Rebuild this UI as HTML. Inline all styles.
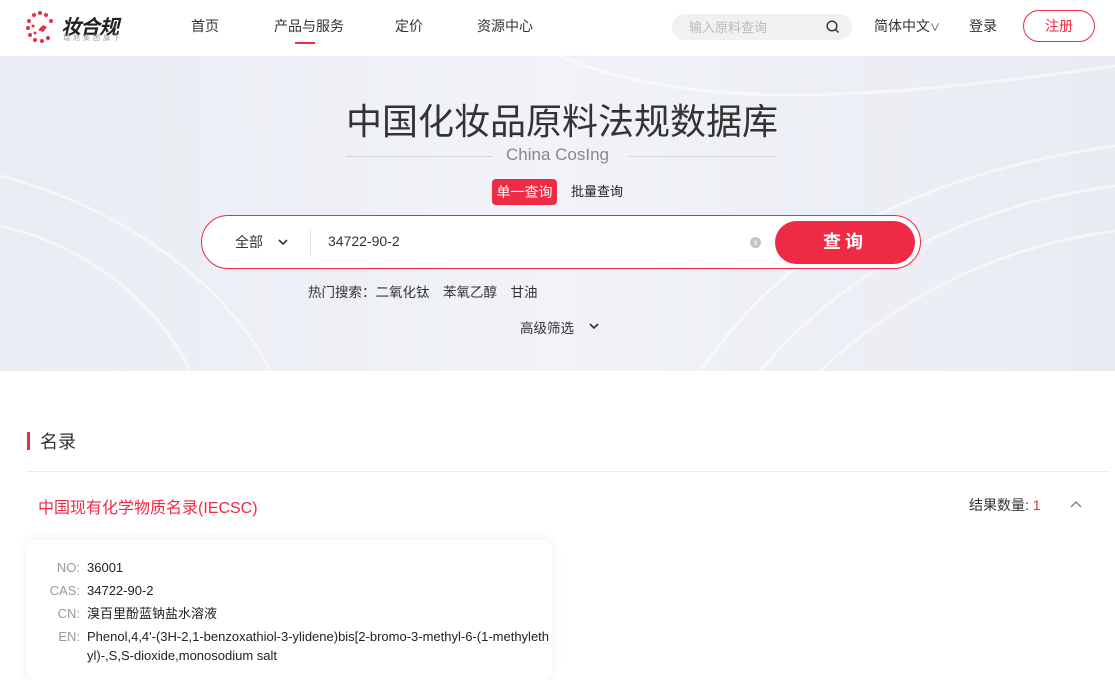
<!DOCTYPE html>
<html><head><meta charset="utf-8"><style>
*{margin:0;padding:0;box-sizing:border-box}
body{width:1115px;height:671px;overflow:hidden;background:#fff;font-family:"Liberation Sans","Noto Sans CJK SC",sans-serif;color:#333;position:relative}
.abs{position:absolute}
.nav{font-size:14px;color:#333;top:16px}
.hero{top:56px;left:0;width:1115px;height:315px;background:linear-gradient(90deg,#e9ecf3,#f1f3f8 50%,#e8ebf2);overflow:hidden}
</style></head><body>
<div class="abs" style="left:26px;top:10px;width:28px;height:34px">
<svg width="28" height="34" viewBox="0 0 28 34"><g fill="#ee2a45">
<circle cx="14" cy="3" r="2"/><circle cx="20" cy="5" r="2"/><circle cx="8" cy="5" r="2"/><circle cx="3" cy="11" r="2"/><circle cx="2" cy="18" r="2"/><circle cx="4" cy="25" r="2"/><circle cx="9" cy="30" r="2"/><circle cx="16" cy="31" r="2"/><circle cx="22" cy="28" r="2"/><circle cx="25" cy="11" r="2"/><circle cx="7" cy="16" r="1.5"/><circle cx="9" cy="23" r="1.5"/><path d="M12 20 l5 -5 l4 2 l-4 5z"/></g></svg></div>
<div class="abs" style="left:61px;top:11px;font-size:20px;font-weight:bold;font-style:italic;color:#222;letter-spacing:-1px">妆合规</div>
<div class="abs" style="left:63px;top:33px;font-size:7px;color:#999;letter-spacing:3px">瑞旭集团旗下</div>
<div class="abs nav" style="left:191px">首页</div>
<div class="abs nav" style="left:274px">产品与服务</div>
<div class="abs" style="left:295px;top:42px;width:20px;height:2px;background:#ee2a45"></div>
<div class="abs nav" style="left:395px">定价</div>
<div class="abs nav" style="left:477px">资源中心</div>
<div class="abs" style="left:672px;top:14px;width:180px;height:26px;border-radius:13px;background:#f1f1f1;font-size:13px;color:#bbb;padding:3px 0 0 17px">输入原料查询</div>
<svg class="abs" style="left:826px;top:20px" width="14" height="14" viewBox="0 0 14 14"><circle cx="6" cy="6" r="4.8" fill="none" stroke="#333" stroke-width="1.4"/><path d="M9.5 9.5l3 3" stroke="#333" stroke-width="1.4"/></svg>
<div class="abs nav" style="left:874px">简体中文<span style="font-size:10px">∨</span></div>
<div class="abs nav" style="left:969px">登录</div>
<div class="abs" style="left:1023px;top:10px;width:72px;height:32px;border:1px solid #ee2a45;border-radius:16px;color:#ee2a45;font-size:14px;text-align:center;line-height:30px">注册</div>
<div class="abs hero">
<svg width="1115" height="315" style="position:absolute;left:0;top:0"><g fill="none" stroke="#fff" stroke-opacity=".5" stroke-width="3">
<path d="M700 315 C780 200 900 120 1115 90"/><path d="M760 315 C840 220 960 150 1115 130"/><path d="M820 315 C900 240 1000 190 1115 175"/><path d="M0 120 C120 150 230 230 270 315"/><path d="M0 170 C90 190 160 250 190 315"/><path d="M560 0 C700 60 900 40 1115 10"/></g></svg>
</div>
<div class="abs" style="left:346px;top:93px;font-size:36px;color:#333;white-space:nowrap;width:430px;text-align:center">中国化妆品原料法规数据库</div>
<div class="abs" style="left:346px;top:156px;width:146px;height:1px;background:#d5d5d8"></div>
<div class="abs" style="left:629px;top:156px;width:147px;height:1px;background:#d5d5d8"></div>
<div class="abs" style="left:506px;top:145px;font-size:17px;color:#888">China CosIng</div>
<div class="abs" style="left:492px;top:179px;width:65px;height:26px;border-radius:4px;background:#ee2a45;color:#fff;font-size:14px;text-align:center;line-height:26px">单一查询</div>
<div class="abs" style="left:571px;top:181px;font-size:13px;color:#222">批量查询</div>
<div class="abs" style="left:201px;top:215px;width:720px;height:54px;border:1px solid #ee2a45;border-radius:27px;background:#fff"></div>
<div class="abs" style="left:235px;top:232px;font-size:14px;color:#333">全部</div>
<svg class="abs" style="left:277px;top:237px" width="12" height="10"><path d="M2 3l4 4 4-4" fill="none" stroke="#333" stroke-width="1.6"/></svg>
<div class="abs" style="left:310px;top:229px;width:1px;height:26px;background:#e2e2e2"></div>
<div class="abs" style="left:328px;top:233px;font-size:14px;color:#333">34722-90-2</div>
<div class="abs" style="left:750px;top:237px;width:11px;height:11px;border-radius:50%;background:#c4c4c4;color:#fff;font-size:8px;text-align:center;line-height:11px">x</div>
<div class="abs" style="left:775px;top:221px;width:140px;height:43px;border-radius:22px;background:#ee2a45;color:#fff;font-size:18px;font-weight:bold;text-align:center;line-height:43px;letter-spacing:4px">查询</div>
<div class="abs" style="left:308px;top:281px;font-size:13.5px;color:#333;word-spacing:3px">热门搜索：二氧化钛&nbsp; 苯氧乙醇&nbsp; 甘油</div>
<div class="abs" style="left:520px;top:317px;font-size:13.5px;color:#333">高级筛选</div>
<svg class="abs" style="left:588px;top:321px" width="12" height="10"><path d="M2 3l4 4 4-4" fill="none" stroke="#333" stroke-width="1.6"/></svg>
<div class="abs" style="left:27px;top:432px;width:3px;height:18px;background:#ee2a45"></div>
<div class="abs" style="left:40px;top:428px;font-size:18px;color:#333">名录</div>
<div class="abs" style="left:27px;top:471px;width:1083px;height:1px;background:#ebebf0"></div>
<div class="abs" style="left:38px;top:494px;font-size:16px;color:#ee2a45">中国现有化学物质名录(IECSC)</div>
<div class="abs" style="left:969px;top:495px;font-size:14px;color:#333">结果数量: <span style="color:#ee2a45">1</span></div>
<svg class="abs" style="left:1069px;top:500px" width="14" height="10"><path d="M2 7l5-5 5 5" fill="none" stroke="#888" stroke-width="1.5"/></svg>
<div class="abs" style="left:27px;top:540px;width:525px;height:140px;border-radius:8px;background:#fff;box-shadow:0 0 12px rgba(0,0,0,.07)"></div>
<div class="abs" style="left:40px;top:556px;font-size:13px;line-height:23px;color:#999;text-align:right;width:40px">NO:<br>CAS:<br>CN:<br>EN:</div>
<div class="abs" style="left:87px;top:556px;font-size:13px;line-height:23px;color:#222;width:465px">36001<br>34722-90-2<br>溴百里酚蓝钠盐水溶液<br><span style="line-height:19px;display:block;margin-top:2px;word-break:break-all">Phenol,4,4'-(3H-2,1-benzoxathiol-3-ylidene)bis[2-bromo-3-methyl-6-(1-methylethyl)-,S,S-dioxide,monosodium salt</span></div>
</body></html>
